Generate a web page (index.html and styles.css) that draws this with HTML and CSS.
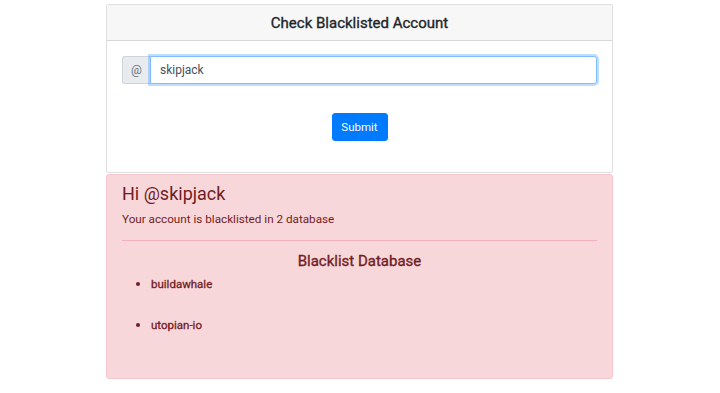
FILE: index.html
```html
<!DOCTYPE html>
<html>
<head>
<meta charset="utf-8">
<link rel="stylesheet" href="styles.css">
</head>
<body>
<div class="wrap">
  <div class="card">
    <div class="card-header">Check Blacklisted Account</div>
    <div class="card-body">
      <div class="input-group">
        <span class="addon">@</span>
        <input class="field" type="text" value="skipjack">
      </div>
      <div class="actions">
        <button class="btn">Submit</button>
      </div>
    </div>
  </div>
  <div class="alert">
    <h4 class="hi">Hi @skipjack</h4>
    <p class="msg">Your account is blacklisted in 2 database</p>
    <hr class="rule">
    <h5 class="db-title">Blacklist Database</h5>
    <ul class="db-list">
      <li>buildawhale</li>
      <li>utopian-io</li>
    </ul>
  </div>
</div>
</body>
</html>
```
FILE: styles.css
```css
* { box-sizing: border-box; }
html, body { margin: 0; padding: 0; background: #fff; }
body {
  font-family: Roboto, "Liberation Sans", Arial, sans-serif;
  font-size: 12px;
  line-height: 1.5;
  color: #212529;
}
.wrap {
  width: 507px;
  margin: 4px auto 0 106px;
}
.card {
  border: 1px solid rgba(0,0,0,0.125);
  border-radius: 3px;
  background: #fff;
}
.card-header {
  background: #f7f7f7;
  border-bottom: 1px solid rgba(0,0,0,0.125);
  height: 36px;
  line-height: 36px;
  text-align: center;
  font-size: 15px;
  font-weight: 400;
  -webkit-text-stroke: 0.35px #212529;
  color: #212529;
  border-radius: 3px 3px 0 0;
}
.card-body {
  padding: 15px 15px 31px;
}
.input-group {
  display: flex;
  height: 28px;
}
.addon {
  width: 28px;
  display: flex;
  align-items: center;
  justify-content: center;
  background: #e9ecef;
  border: 1px solid #ced4da;
  border-right: none;
  border-radius: 3px 0 0 3px;
  color: #6c757d;
  font-size: 12px;
}
.field {
  flex: 1;
  min-width: 0;
  height: 28px;
  border: 1px solid #80bdff;
  border-radius: 0 3px 3px 0;
  box-shadow: 0 0 0 2px rgba(0,123,255,0.25);
  padding: 0 9px;
  font-family: inherit;
  font-size: 12px;
  color: #495057;
  outline: none;
}
.actions {
  display: flex;
  justify-content: center;
  margin-top: 29px;
}
.btn {
  width: 56px;
  height: 28px;
  background: #007bff;
  border: 1px solid #007bff;
  border-radius: 3px;
  color: #fff;
  font-family: inherit;
  font-size: 11.5px;
  padding: 0;
}
.alert {
  margin-top: 1px;
  height: 205px;
  background: #f8d7da;
  border: 1px solid #f5c6cb;
  border-radius: 3px;
  color: #721c24;
  padding: 8px 15px;
}
.hi {
  margin: 0;
  font-size: 18px;
  font-weight: 400;
  line-height: 1.2;
  color: #721c24;
}
.msg {
  margin: 6px 0 0;
  font-size: 11.7px;
  line-height: 1.5;
}
.rule {
  margin: 12px 0 0;
  border: 0;
  border-top: 1px solid #f1b0b7;
}
.db-title {
  margin: 11px 0 0;
  text-align: center;
  font-size: 15px;
  font-weight: 400;
  -webkit-text-stroke: 0.35px #721c24;
  line-height: 1.2;
}
.db-list {
  margin: 5px 0 0;
  padding-left: 29px;
  font-size: 11.5px;
  font-weight: 400;
  -webkit-text-stroke: 0.3px #721c24;
}
.db-list li {
  line-height: 17px;
  margin-bottom: 23px;
}
.db-list li::marker {
  font-size: 13px;
}
```
